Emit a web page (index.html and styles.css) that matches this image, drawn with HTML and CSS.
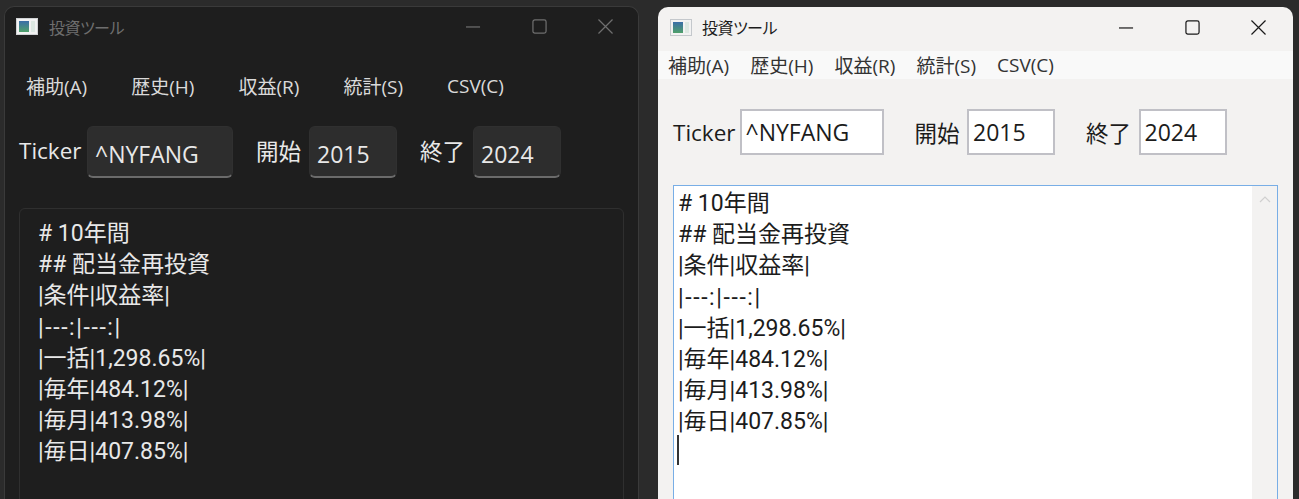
FILE: index.html
```html
<!DOCTYPE html>
<html lang="ja">
<head>
    <meta charset="UTF-8">
    <title>投資ツール</title>
    <link rel="stylesheet" href="styles.css">
</head>
<body>
    <div class="window dark">
        <div class="titlebar">
            <svg class="app-icon" viewBox="0 0 22 17">
                <defs><linearGradient id="iconDark" x1="0" y1="0" x2="0" y2="1"><stop offset="0" stop-color="#3a6ea8"/><stop offset="1" stop-color="#4fa06a"/></linearGradient></defs>
                <rect x="0.5" y="0.5" width="21" height="16" fill="#f2f2f2" stroke="#d0d2d4"/>
                <rect x="3" y="3" width="10" height="11" fill="url(#iconDark)"/>
                <rect x="15" y="3" width="4" height="11" fill="#dde8e2"/>
            </svg>
            <span class="title">投資ツール</span>
            <div class="controls">
                <svg viewBox="0 0 16 16"><path d="M0 8.500H15" /></svg>
                <svg viewBox="0 0 16 16"><rect x="1" y="1" width="14" height="14" rx="2" /></svg>
                <svg viewBox="0 0 16 16"><path d="M0.500 0.500L15.500 15.500M15.500 0.500L0.500 15.500" /></svg>
            </div>
        </div>
        <div class="menubar">
            <span>補助(A)</span>
            <span>歴史(H)</span>
            <span>収益(R)</span>
            <span>統計(S)</span>
            <span>CSV(C)</span>
        </div>
        <div class="form-row">
            <label>Ticker</label>
            <div class="field ticker">^NYFANG</div>
            <label>開始</label>
            <div class="field year">2015</div>
            <label>終了</label>
            <div class="field year">2024</div>
        </div>
        <div class="output">
            <p># 10年間</p>
            <p>## 配当金再投資</p>
            <p>|条件|収益率|</p>
            <p class="rule">|---:|---:|</p>
            <p>|一括|1,298.65%|</p>
            <p>|毎年|484.12%|</p>
            <p>|毎月|413.98%|</p>
            <p>|毎日|407.85%|</p>
        </div>
    </div>

    <div class="window light">
        <div class="titlebar">
            <svg class="app-icon" viewBox="0 0 22 17">
                <defs><linearGradient id="iconLight" x1="0" y1="0" x2="0" y2="1"><stop offset="0" stop-color="#3a6ea8"/><stop offset="1" stop-color="#4fa06a"/></linearGradient></defs>
                <rect x="0.5" y="0.5" width="21" height="16" fill="#f2f2f2" stroke="#c4c8cc"/>
                <rect x="3" y="3" width="10" height="11" fill="url(#iconLight)"/>
                <rect x="15" y="3" width="4" height="11" fill="#dde8e2"/>
            </svg>
            <span class="title">投資ツール</span>
            <div class="controls">
                <svg viewBox="0 0 16 16"><path d="M0 8.500H15" /></svg>
                <svg viewBox="0 0 16 16"><rect x="1" y="1" width="14" height="14" rx="2" /></svg>
                <svg viewBox="0 0 16 16"><path d="M0.500 0.500L15.500 15.500M15.500 0.500L0.500 15.500" /></svg>
            </div>
        </div>
        <div class="menubar">
            <span>補助(A)</span>
            <span>歴史(H)</span>
            <span>収益(R)</span>
            <span>統計(S)</span>
            <span>CSV(C)</span>
        </div>
        <div class="form-row">
            <label>Ticker</label>
            <div class="field ticker">^NYFANG</div>
            <label>開始</label>
            <div class="field year">2015</div>
            <label>終了</label>
            <div class="field year">2024</div>
        </div>
        <div class="output">
            <p># 10年間</p>
            <p>## 配当金再投資</p>
            <p>|条件|収益率|</p>
            <p class="rule">|---:|---:|</p>
            <p>|一括|1,298.65%|</p>
            <p>|毎年|484.12%|</p>
            <p>|毎月|413.98%|</p>
            <p>|毎日|407.85%|</p>
            <i class="caret"></i>
            <div class="scrollbar">
                <svg viewBox="0 0 12 7"><path d="M1 6L6 1L11 6" /></svg>
            </div>
        </div>
    </div>
</body>
</html>
```

FILE: styles.css
```css
html, body {
    height: 100%;
}

body {
    margin: 0;
    background-color: #2b2b2b;
    font-family: "Open Sans", "Noto Sans CJK JP", sans-serif;
    display: flex;
    align-items: flex-start;
    height: 499px;
    overflow: hidden;
    padding: 6px 6px 0 4px;
    box-sizing: border-box;
    gap: 19px;
}

.window {
    width: 635px;
    height: 520px;
    flex-shrink: 0;
    border-radius: 10px 10px 0 0;
    box-sizing: border-box;
}

.window.dark {
    background-color: #1e1e1e;
    color: #e8e8e8;
    border: 1px solid #3a3a3a;
    border-bottom: none;
}

.window.light {
    background-color: #f3f2f1;
    color: #1c1c1c;
    margin-top: 1px;
}

.titlebar {
    display: flex;
    align-items: center;
    height: 42px;
    padding: 0 0 3px 11px;
    box-sizing: border-box;
}

.light .titlebar {
    height: 44px;
    padding: 0 0 4px 12px;
}

.app-icon {
    width: 22px;
    height: 17px;
    margin-right: 11px;
}

.light .app-icon {
    margin-right: 10px;
}

.title {
    font-size: 16px;
    font-family: "Noto Sans CJK JP", sans-serif;
    font-feature-settings: "palt";
    letter-spacing: -0.5px;
}

.dark .title {
    color: #6e6e6e;
}

.controls {
    display: flex;
    align-items: center;
    gap: 51px;
    margin-left: auto;
    margin-right: 25px;
}

.light .controls {
    margin-right: 27px;
}

.controls svg {
    width: 15px;
    height: 15px;
    fill: none;
    stroke-width: 1.3;
}

.dark .controls svg {
    stroke: #6f6f6f;
}

.light .controls svg {
    stroke: #1a1a1a;
}

.menubar {
    display: flex;
    font-size: 19px;
    white-space: nowrap;
}

.dark .menubar {
    height: 46px;
    margin-top: 14px;
    padding-left: 21px;
    gap: 44px;
    align-items: center;
    color: #dadada;
}

.light .menubar {
    height: 28px;
    background-color: #f9f9f9;
    padding-left: 10px;
    gap: 21px;
    align-items: center;
    color: #333333;
}

.form-row {
    display: flex;
    align-items: center;
    font-size: 22.5px;
}

.dark .form-row {
    padding: 17px 0 0 14px;
}

.light .form-row {
    padding: 30px 0 0 15px;
}

.form-row label {
    white-space: nowrap;
}

.dark .form-row label {
    padding-bottom: 4px;
}

.field {
    box-sizing: border-box;
    font-size: 23px;
    display: flex;
    align-items: center;
}

.dark .field {
    height: 52px;
    background-color: #2d2d2d;
    border: 1px solid #303030;
    border-bottom: 2px solid #6b6b6b;
    border-radius: 6px;
    padding: 4px 0 0 7px;
}

.light .field {
    height: 46px;
    background-color: #ffffff;
    border: 2px solid #c0c0c6;
    padding-left: 4px;
}

.dark .ticker { width: 146px; margin: 0 23px 0 5.500px; }
.dark .year { width: 88px; margin: 0 23px 0 8px; }
.light .ticker { width: 144px; margin: 0 31px 0 4px; }
.light .year { width: 88px; margin: 0 31px 0 7.500px; }

.output {
    position: relative;
    box-sizing: border-box;
    font-family: Roboto, "Noto Sans CJK JP", sans-serif;
    font-size: 23px;
    line-height: 31.2px;
}

.output p {
    margin: 0;
    white-space: pre;
}

.output .rule {
    letter-spacing: 1.6px;
}

.dark .output {
    margin: 30px 14px 0 14px;
    height: 300px;
    padding: 9px 0 0 18px;
    border: 1px solid #2f2f2f;
    border-radius: 6px;
}

.light .output {
    margin: 30px 15px 0 15px;
    height: 320px;
    padding: 2px 0 0 4px;
    background-color: #ffffff;
    border: 1px solid #78aee6;
}

.caret {
    display: block;
    width: 2px;
    height: 30px;
    margin: -3px 0 0 -1px;
    background-color: #333333;
}

.scrollbar {
    position: absolute;
    top: 0;
    right: 0;
    bottom: 0;
    width: 25px;
    background-color: #f3f2f1;
    display: flex;
    justify-content: center;
    padding-top: 10px;
    box-sizing: border-box;
}

.scrollbar svg {
    width: 12px;
    height: 7px;
    fill: none;
    stroke: #d0d0d0;
    stroke-width: 1.2;
}
```
